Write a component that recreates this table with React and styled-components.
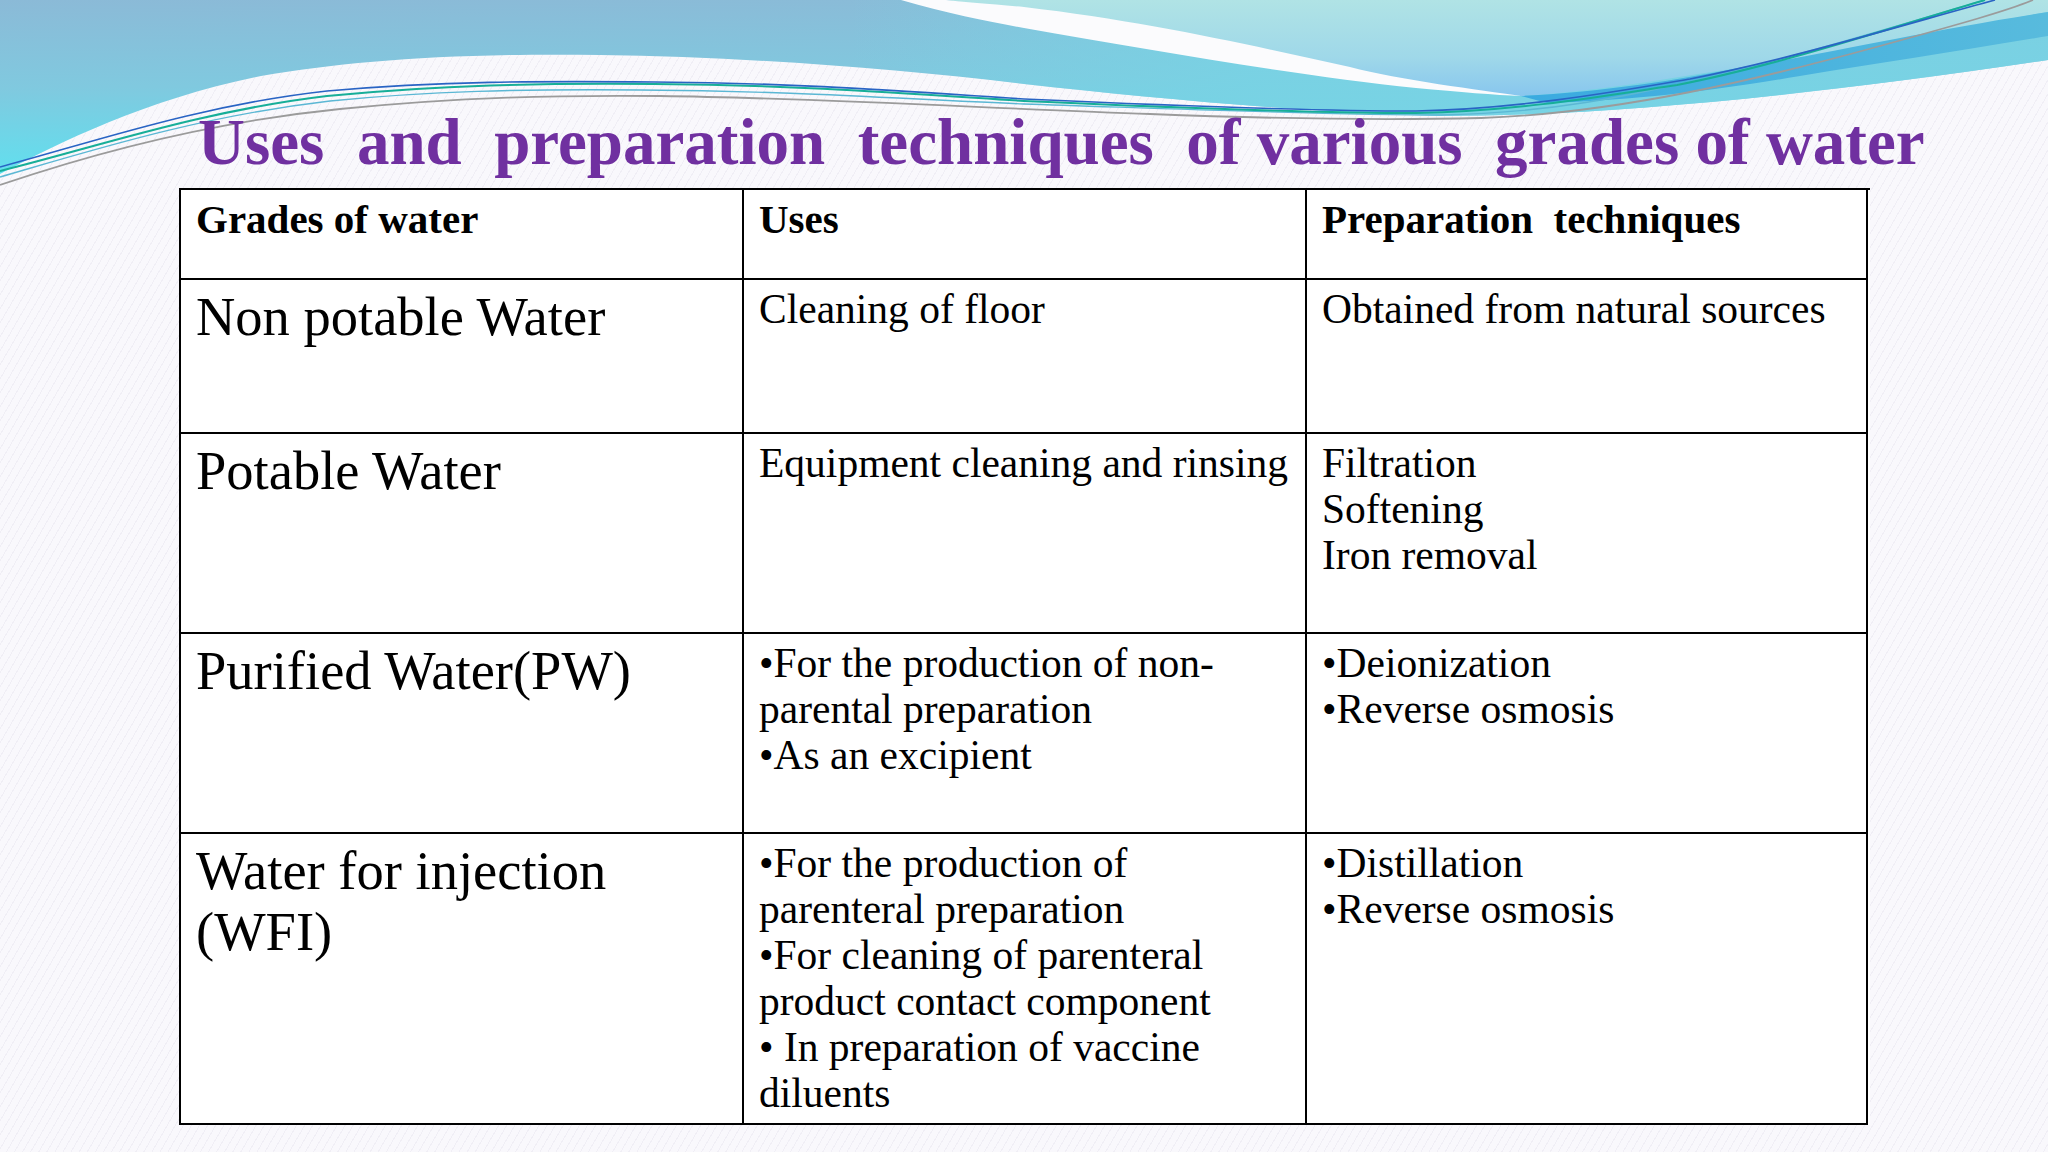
import React from "react";
import styled, { createGlobalStyle } from "styled-components";

const Global = createGlobalStyle`
  html, body { margin: 0; padding: 0; }
  body { width: 2048px; height: 1152px; overflow: hidden; background: #f8f7fb; }
`;

const Slide = styled.div`
  position: relative;
  width: 2048px;
  height: 1152px;
  overflow: hidden;
  background-color: #f9f8fc;
  background-image: repeating-linear-gradient(
    120deg,
    rgba(200, 195, 215, 0.18) 0px,
    rgba(200, 195, 215, 0.18) 1px,
    transparent 1px,
    transparent 7px
  );
  font-family: "Liberation Serif", "Times New Roman", serif;
  color: #000;
`;

const Wave = styled.svg`
  position: absolute;
  left: 0;
  top: 0;
  width: 2048px;
  height: 200px;
  pointer-events: none;
`;

const Content = styled.div`
  position: relative;
  display: flex;
  flex-direction: column;
  padding: 105px 0 0 179px;
`;

const Title = styled.h1`
  margin: 0 0 9px 19px;
  font-family: "Liberation Serif", "Times New Roman", serif;
  font-weight: bold;
  font-size: 65px;
  line-height: 74px;
  color: #7030a0;
  white-space: pre;
`;

const Table = styled.div`
  display: grid;
  grid-template-columns: 563px 563px 561px;
  width: 1689px;
  border-top: 2px solid #000;
  border-left: 2px solid #000;
  background: #fff;
`;

const Cell = styled.div`
  box-sizing: border-box;
  height: ${(p) => p.$h}px;
  padding: 6px 14px 0 15px;
  border-right: 2px solid #000;
  border-bottom: 2px solid #000;
  display: flex;
  flex-direction: column;
`;

const HeadText = styled.div`
  font-weight: bold;
  font-size: 41px;
  line-height: 46px;
  white-space: pre;
`;

const GradeLine = styled.div`
  font-size: 54.5px;
  line-height: 61px;
  white-space: pre;
`;

const BodyLine = styled.div`
  font-size: 41.5px;
  line-height: 46px;
  white-space: pre;
`;

const rows = [
  {
    h: 154,
    grade: ["Non potable Water"],
    uses: ["Cleaning of floor"],
    prep: ["Obtained from natural sources"],
  },
  {
    h: 200,
    grade: ["Potable Water"],
    uses: ["Equipment cleaning and rinsing"],
    prep: ["Filtration", "Softening", "Iron removal"],
  },
  {
    h: 200,
    grade: ["Purified Water(PW)"],
    uses: ["•For the production of non-", "parental preparation", "•As an excipient"],
    prep: ["•Deionization", "•Reverse osmosis"],
  },
  {
    h: 291,
    grade: ["Water for injection", "(WFI)"],
    uses: [
      "•For the production of",
      "parenteral preparation",
      "•For cleaning of parenteral",
      "product contact component",
      "• In preparation of vaccine",
      "diluents",
    ],
    prep: ["•Distillation", "•Reverse osmosis"],
  },
];

function WaveArt() {
  return (
    <Wave viewBox="0 0 2048 200" xmlns="http://www.w3.org/2000/svg">
      <defs>
        <linearGradient id="leftBlue" x1="0" y1="0" x2="0.12" y2="1">
          <stop offset="0" stopColor="#8bbad7" />
          <stop offset="0.5" stopColor="#80c9df" />
          <stop offset="1" stopColor="#60e0ef" />
        </linearGradient>
        <linearGradient id="midCyan" gradientUnits="userSpaceOnUse" x1="850" y1="0" x2="1250" y2="0">
          <stop offset="0" stopColor="#78d3e4" stopOpacity="0" />
          <stop offset="1" stopColor="#78d3e4" stopOpacity="0.85" />
        </linearGradient>
        <linearGradient id="rightAqua" x1="0" y1="0" x2="0" y2="1">
          <stop offset="0" stopColor="#b0e3e5" />
          <stop offset="0.6" stopColor="#9fd8e9" />
          <stop offset="1" stopColor="#88c6ee" />
        </linearGradient>
        <linearGradient id="darkBand" x1="0" y1="0" x2="1" y2="0">
          <stop offset="0" stopColor="#3aaae0" />
          <stop offset="1" stopColor="#58bbdd" />
        </linearGradient>
      </defs>
      {/* whole blue band down to the white hill */}
      <path
        d="M0,0 H2048 V60 C1800,97 1600,116 1440,116 C1300,112 1150,98 1024,84 C900,69 750,57 600,55 C450,53 350,61 261,76 C150,98 60,142 0,174 Z"
        fill="url(#leftBlue)"
      />
      {/* cyan tint right of the peak */}
      <path
        d="M850,0 H2048 V60 C1800,97 1600,116 1440,116 C1300,112 1150,98 1024,84 C960,76 900,68 850,63 Z"
        fill="url(#midCyan)"
      />
      {/* light aqua upper right */}
      <path
        d="M946,0 H2048 V12 C1940,30 1820,58 1743,67 C1660,80 1590,92 1521,96 C1420,86 1280,64 1200,36 C1110,18 1000,8 946,0 Z"
        fill="url(#rightAqua)"
      />
      {/* dark blue band */}
      <path
        d="M1521,96 C1600,92 1680,80 1743,67 C1820,55 1930,30 2048,12 V36 C1960,51 1880,63 1800,76 C1700,93 1620,101 1547,103 Z"
        fill="url(#darkBand)"
      />
      {/* white swoosh */}
      <path
        d="M901,0 C950,14 990,22 1024,28 C1150,50 1300,76 1416,88 C1460,92 1495,95 1521,96 C1480,90 1400,80 1350,67 C1250,45 1150,22 1024,7 C990,4 965,2 946,0 Z"
        fill="#fbfbfd"
      />
      {/* thin lines */}
      <path
        d="M0,177 C90,151 200,116 330,101 C430,91 520,89 640,90 C800,91 900,99 1024,104 C1180,109 1330,115 1440,115 C1560,113 1640,93 1720,75 C1830,47 1930,16 1985,0"
        fill="none"
        stroke="#5bb7d4"
        strokeWidth="1.4"
      />
      <path
        d="M0,171 C90,149 200,111 327,96 C440,85 540,83 654,84 C800,85 900,93 1024,101 C1180,108 1330,113 1416,113 C1520,111 1610,95 1677,85 C1780,65 1900,25 1985,0"
        fill="none"
        stroke="#17ae98"
        strokeWidth="2"
      />
      <path
        d="M0,167 C90,143 200,105 327,91 C440,81 540,81 654,82 C800,83 900,91 1024,99 C1180,106 1330,111 1416,111 C1520,109 1620,91 1690,79 C1800,57 1920,20 1995,0"
        fill="none"
        stroke="#2964c4"
        strokeWidth="1.6"
      />
      <path
        d="M0,185 C100,151 220,121 340,109 C460,97 560,95 660,96 C820,98 1000,109 1150,114 C1280,119 1400,120 1481,118 C1620,113 1760,79 1880,46 C1960,24 2010,10 2033,0"
        fill="none"
        stroke="#9b9b9b"
        strokeWidth="1.8"
      />
    </Wave>
  );
}

export default function App() {
  return (
    <>
      <Global />
      <Slide>
        <WaveArt />
        <Content>
          <Title>{"Uses  and  preparation  techniques  of various  grades of water"}</Title>
          <Table>
            <Cell $h={90}>
              <HeadText>Grades of water</HeadText>
            </Cell>
            <Cell $h={90}>
              <HeadText>Uses</HeadText>
            </Cell>
            <Cell $h={90}>
              <HeadText>{"Preparation  techniques"}</HeadText>
            </Cell>
            {rows.map((r, i) => (
              <React.Fragment key={i}>
                <Cell $h={r.h}>
                  {r.grade.map((t, j) => (
                    <GradeLine key={j}>{t}</GradeLine>
                  ))}
                </Cell>
                <Cell $h={r.h}>
                  {r.uses.map((t, j) => (
                    <BodyLine key={j}>{t}</BodyLine>
                  ))}
                </Cell>
                <Cell $h={r.h}>
                  {r.prep.map((t, j) => (
                    <BodyLine key={j}>{t}</BodyLine>
                  ))}
                </Cell>
              </React.Fragment>
            ))}
          </Table>
        </Content>
      </Slide>
    </>
  );
}
